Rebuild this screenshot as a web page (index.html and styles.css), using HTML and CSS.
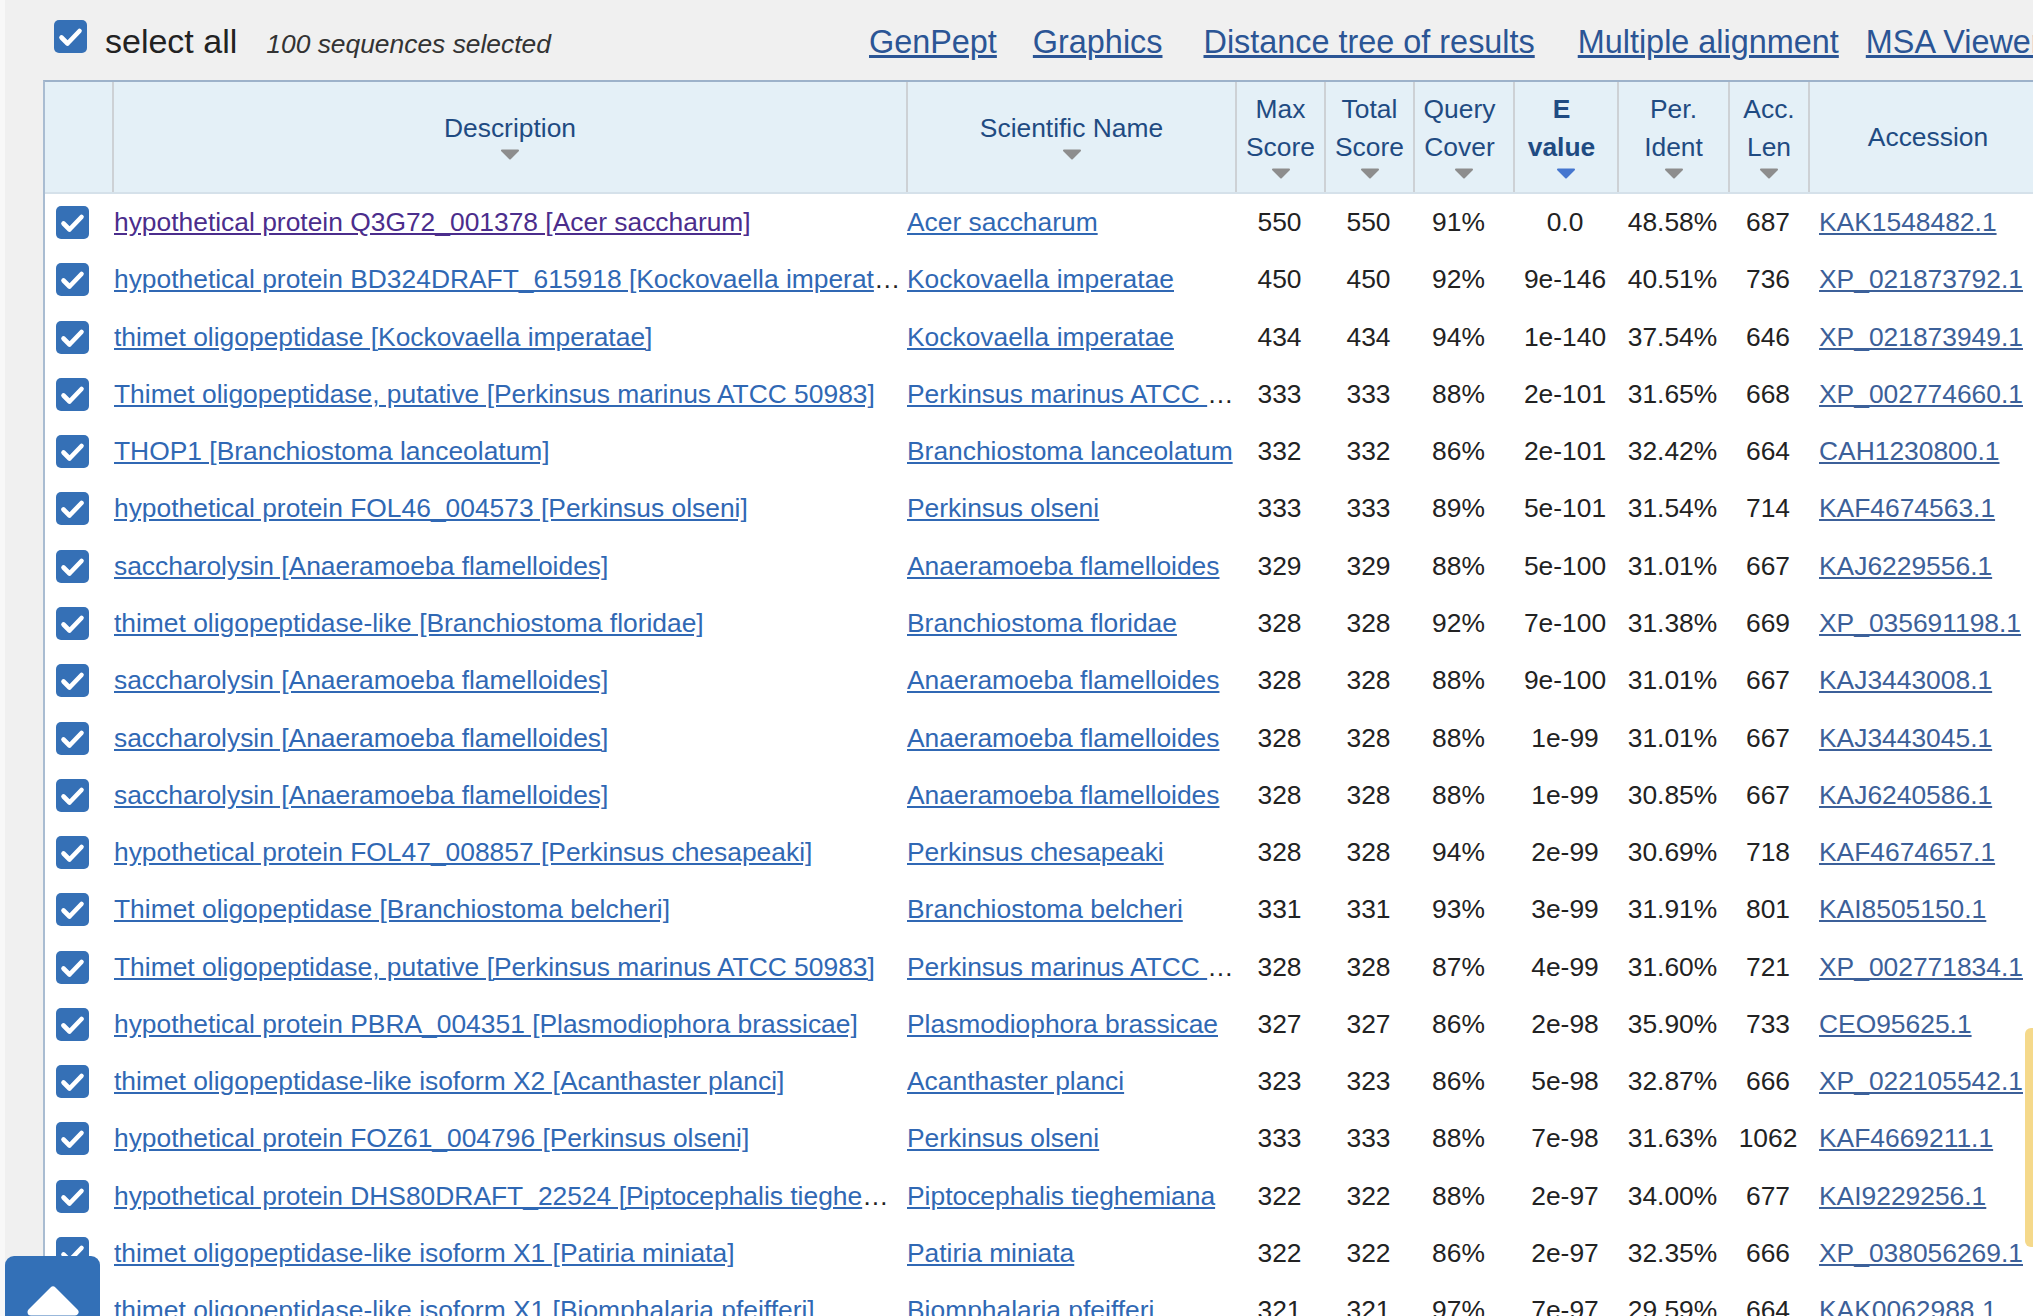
FILE: index.html
```html
<!DOCTYPE html>
<html lang="en">
<head>
<meta charset="utf-8">
<title>BLAST results</title>
<link rel="stylesheet" href="styles.css">
</head>
<body>
<svg class="defs" width="0" height="0" aria-hidden="true">
  <defs>
    <symbol id="cb" viewBox="0 0 33 33">
      <rect width="33" height="33" rx="5" fill="#3570b6"/>
      <path d="M7.5 17.5l6 6L25.5 11" fill="none" stroke="#fff" stroke-width="4.6" stroke-linecap="round" stroke-linejoin="round"/>
    </symbol>
    <symbol id="sort" viewBox="0 0 20 11">
      <path d="M2 1.5h16L10 9.5z" stroke-width="2" stroke-linejoin="round"/>
    </symbol>
  </defs>
</svg>
<div class="page">
  <div class="toolbar">
    <div class="sel">
      <svg class="cb top-cb"><use href="#cb"/></svg>
      <span class="sel-label">select all</span>
      <span class="sel-count">100 sequences selected</span>
    </div>
    <nav class="links">
      <a href="#" class="l-genpept">GenPept</a>
      <a href="#" class="l-graphics">Graphics</a>
      <a href="#" class="l-tree">Distance tree of results</a>
      <a href="#" class="l-multi">Multiple alignment</a>
      <a href="#" class="l-msa">MSA Viewer</a>
    </nav>
  </div>

  <div class="results">
    <div class="row head">
      <div class="h"></div>
      <div class="h"><span>Description</span><svg class="sort"><use href="#sort"/></svg></div>
      <div class="h"><span>Scientific Name</span><svg class="sort"><use href="#sort"/></svg></div>
      <div class="h"><span>Max<br>Score</span><svg class="sort"><use href="#sort"/></svg></div>
      <div class="h"><span>Total<br>Score</span><svg class="sort"><use href="#sort"/></svg></div>
      <div class="h shift"><span>Query<br>Cover</span><svg class="sort"><use href="#sort"/></svg></div>
      <div class="h active shift"><span>E<br>value</span><svg class="sort"><use href="#sort"/></svg></div>
      <div class="h"><span>Per.<br>Ident</span><svg class="sort"><use href="#sort"/></svg></div>
      <div class="h"><span>Acc.<br>Len</span><svg class="sort"><use href="#sort"/></svg></div>
      <div class="h"><span>Accession</span></div>
    </div>

    <div class="row"><div class="c chk"><svg class="cb"><use href="#cb"/></svg></div><div class="c desc"><a href="#" class="visited">hypothetical protein Q3G72_001378 [Acer saccharum]</a></div><div class="c sci"><a href="#">Acer saccharum</a></div><div class="c n">550</div><div class="c n">550</div><div class="c n q">91%</div><div class="c n">0.0</div><div class="c n">48.58%</div><div class="c n">687</div><div class="c acc"><a href="#">KAK1548482.1</a></div></div>
    <div class="row"><div class="c chk"><svg class="cb"><use href="#cb"/></svg></div><div class="c desc"><a href="#">hypothetical protein BD324DRAFT_615918 [Kockovaella imperatae]</a></div><div class="c sci"><a href="#">Kockovaella imperatae</a></div><div class="c n">450</div><div class="c n">450</div><div class="c n q">92%</div><div class="c n">9e-146</div><div class="c n">40.51%</div><div class="c n">736</div><div class="c acc"><a href="#">XP_021873792.1</a></div></div>
    <div class="row"><div class="c chk"><svg class="cb"><use href="#cb"/></svg></div><div class="c desc"><a href="#">thimet oligopeptidase [Kockovaella imperatae]</a></div><div class="c sci"><a href="#">Kockovaella imperatae</a></div><div class="c n">434</div><div class="c n">434</div><div class="c n q">94%</div><div class="c n">1e-140</div><div class="c n">37.54%</div><div class="c n">646</div><div class="c acc"><a href="#">XP_021873949.1</a></div></div>
    <div class="row"><div class="c chk"><svg class="cb"><use href="#cb"/></svg></div><div class="c desc"><a href="#">Thimet oligopeptidase, putative [Perkinsus marinus ATCC 50983]</a></div><div class="c sci"><a href="#">Perkinsus marinus ATCC 50983</a></div><div class="c n">333</div><div class="c n">333</div><div class="c n q">88%</div><div class="c n">2e-101</div><div class="c n">31.65%</div><div class="c n">668</div><div class="c acc"><a href="#">XP_002774660.1</a></div></div>
    <div class="row"><div class="c chk"><svg class="cb"><use href="#cb"/></svg></div><div class="c desc"><a href="#">THOP1 [Branchiostoma lanceolatum]</a></div><div class="c sci"><a href="#">Branchiostoma lanceolatum</a></div><div class="c n">332</div><div class="c n">332</div><div class="c n q">86%</div><div class="c n">2e-101</div><div class="c n">32.42%</div><div class="c n">664</div><div class="c acc"><a href="#">CAH1230800.1</a></div></div>
    <div class="row"><div class="c chk"><svg class="cb"><use href="#cb"/></svg></div><div class="c desc"><a href="#">hypothetical protein FOL46_004573 [Perkinsus olseni]</a></div><div class="c sci"><a href="#">Perkinsus olseni</a></div><div class="c n">333</div><div class="c n">333</div><div class="c n q">89%</div><div class="c n">5e-101</div><div class="c n">31.54%</div><div class="c n">714</div><div class="c acc"><a href="#">KAF4674563.1</a></div></div>
    <div class="row"><div class="c chk"><svg class="cb"><use href="#cb"/></svg></div><div class="c desc"><a href="#">saccharolysin [Anaeramoeba flamelloides]</a></div><div class="c sci"><a href="#">Anaeramoeba flamelloides</a></div><div class="c n">329</div><div class="c n">329</div><div class="c n q">88%</div><div class="c n">5e-100</div><div class="c n">31.01%</div><div class="c n">667</div><div class="c acc"><a href="#">KAJ6229556.1</a></div></div>
    <div class="row"><div class="c chk"><svg class="cb"><use href="#cb"/></svg></div><div class="c desc"><a href="#">thimet oligopeptidase-like [Branchiostoma floridae]</a></div><div class="c sci"><a href="#">Branchiostoma floridae</a></div><div class="c n">328</div><div class="c n">328</div><div class="c n q">92%</div><div class="c n">7e-100</div><div class="c n">31.38%</div><div class="c n">669</div><div class="c acc"><a href="#">XP_035691198.1</a></div></div>
    <div class="row"><div class="c chk"><svg class="cb"><use href="#cb"/></svg></div><div class="c desc"><a href="#">saccharolysin [Anaeramoeba flamelloides]</a></div><div class="c sci"><a href="#">Anaeramoeba flamelloides</a></div><div class="c n">328</div><div class="c n">328</div><div class="c n q">88%</div><div class="c n">9e-100</div><div class="c n">31.01%</div><div class="c n">667</div><div class="c acc"><a href="#">KAJ3443008.1</a></div></div>
    <div class="row"><div class="c chk"><svg class="cb"><use href="#cb"/></svg></div><div class="c desc"><a href="#">saccharolysin [Anaeramoeba flamelloides]</a></div><div class="c sci"><a href="#">Anaeramoeba flamelloides</a></div><div class="c n">328</div><div class="c n">328</div><div class="c n q">88%</div><div class="c n">1e-99</div><div class="c n">31.01%</div><div class="c n">667</div><div class="c acc"><a href="#">KAJ3443045.1</a></div></div>
    <div class="row"><div class="c chk"><svg class="cb"><use href="#cb"/></svg></div><div class="c desc"><a href="#">saccharolysin [Anaeramoeba flamelloides]</a></div><div class="c sci"><a href="#">Anaeramoeba flamelloides</a></div><div class="c n">328</div><div class="c n">328</div><div class="c n q">88%</div><div class="c n">1e-99</div><div class="c n">30.85%</div><div class="c n">667</div><div class="c acc"><a href="#">KAJ6240586.1</a></div></div>
    <div class="row"><div class="c chk"><svg class="cb"><use href="#cb"/></svg></div><div class="c desc"><a href="#">hypothetical protein FOL47_008857 [Perkinsus chesapeaki]</a></div><div class="c sci"><a href="#">Perkinsus chesapeaki</a></div><div class="c n">328</div><div class="c n">328</div><div class="c n q">94%</div><div class="c n">2e-99</div><div class="c n">30.69%</div><div class="c n">718</div><div class="c acc"><a href="#">KAF4674657.1</a></div></div>
    <div class="row"><div class="c chk"><svg class="cb"><use href="#cb"/></svg></div><div class="c desc"><a href="#">Thimet oligopeptidase [Branchiostoma belcheri]</a></div><div class="c sci"><a href="#">Branchiostoma belcheri</a></div><div class="c n">331</div><div class="c n">331</div><div class="c n q">93%</div><div class="c n">3e-99</div><div class="c n">31.91%</div><div class="c n">801</div><div class="c acc"><a href="#">KAI8505150.1</a></div></div>
    <div class="row"><div class="c chk"><svg class="cb"><use href="#cb"/></svg></div><div class="c desc"><a href="#">Thimet oligopeptidase, putative [Perkinsus marinus ATCC 50983]</a></div><div class="c sci"><a href="#">Perkinsus marinus ATCC 50983</a></div><div class="c n">328</div><div class="c n">328</div><div class="c n q">87%</div><div class="c n">4e-99</div><div class="c n">31.60%</div><div class="c n">721</div><div class="c acc"><a href="#">XP_002771834.1</a></div></div>
    <div class="row"><div class="c chk"><svg class="cb"><use href="#cb"/></svg></div><div class="c desc"><a href="#">hypothetical protein PBRA_004351 [Plasmodiophora brassicae]</a></div><div class="c sci"><a href="#">Plasmodiophora brassicae</a></div><div class="c n">327</div><div class="c n">327</div><div class="c n q">86%</div><div class="c n">2e-98</div><div class="c n">35.90%</div><div class="c n">733</div><div class="c acc"><a href="#">CEO95625.1</a></div></div>
    <div class="row"><div class="c chk"><svg class="cb"><use href="#cb"/></svg></div><div class="c desc"><a href="#">thimet oligopeptidase-like isoform X2 [Acanthaster planci]</a></div><div class="c sci"><a href="#">Acanthaster planci</a></div><div class="c n">323</div><div class="c n">323</div><div class="c n q">86%</div><div class="c n">5e-98</div><div class="c n">32.87%</div><div class="c n">666</div><div class="c acc"><a href="#">XP_022105542.1</a></div></div>
    <div class="row"><div class="c chk"><svg class="cb"><use href="#cb"/></svg></div><div class="c desc"><a href="#">hypothetical protein FOZ61_004796 [Perkinsus olseni]</a></div><div class="c sci"><a href="#">Perkinsus olseni</a></div><div class="c n">333</div><div class="c n">333</div><div class="c n q">88%</div><div class="c n">7e-98</div><div class="c n">31.63%</div><div class="c n">1062</div><div class="c acc"><a href="#">KAF4669211.1</a></div></div>
    <div class="row"><div class="c chk"><svg class="cb"><use href="#cb"/></svg></div><div class="c desc"><a href="#">hypothetical protein DHS80DRAFT_22524 [Piptocephalis tieghemiana]</a></div><div class="c sci"><a href="#">Piptocephalis tieghemiana</a></div><div class="c n">322</div><div class="c n">322</div><div class="c n q">88%</div><div class="c n">2e-97</div><div class="c n">34.00%</div><div class="c n">677</div><div class="c acc"><a href="#">KAI9229256.1</a></div></div>
    <div class="row"><div class="c chk"><svg class="cb"><use href="#cb"/></svg></div><div class="c desc"><a href="#">thimet oligopeptidase-like isoform X1 [Patiria miniata]</a></div><div class="c sci"><a href="#">Patiria miniata</a></div><div class="c n">322</div><div class="c n">322</div><div class="c n q">86%</div><div class="c n">2e-97</div><div class="c n">32.35%</div><div class="c n">666</div><div class="c acc"><a href="#">XP_038056269.1</a></div></div>
    <div class="row"><div class="c chk"><svg class="cb"><use href="#cb"/></svg></div><div class="c desc"><a href="#">thimet oligopeptidase-like isoform X1 [Biomphalaria pfeifferi]</a></div><div class="c sci"><a href="#">Biomphalaria pfeifferi</a></div><div class="c n">321</div><div class="c n">321</div><div class="c n q">97%</div><div class="c n">7e-97</div><div class="c n">29.59%</div><div class="c n">664</div><div class="c acc"><a href="#">KAK0062988.1</a></div></div>
  </div>
</div>

<a href="#" class="to-top" aria-label="Back to top">
  <svg width="95" height="60" viewBox="0 0 95 60"><path d="M48 34L70 56H26z" fill="#fff" stroke="#fff" stroke-width="7" stroke-linejoin="round"/></svg>
</a>
<div class="feedback-tab"></div>
</body>
</html>
```

FILE: styles.css
```css
html, body {
  margin: 0;
  padding: 0;
  overflow: hidden;
  height: 100%;
}

body {
  background: #f0f0f0;
  font-family: "Liberation Sans", Arial, Helvetica, sans-serif;
  font-size: 26.4px;
  color: #222;
}

.defs {
  position: absolute;
  width: 0;
  height: 0;
  overflow: hidden;
}

.page {
  border-left: 5px solid #f8f8f8;
  min-height: 100%;
  box-sizing: border-box;
}

/* toolbar */
.toolbar {
  display: flex;
  align-items: baseline;
  height: 80px;
  box-sizing: border-box;
  padding-top: 20px;
  padding-left: 49px;
  white-space: nowrap;
}

.sel {
  display: flex;
  align-items: baseline;
  flex: 0 0 815px;
}

.cb {
  width: 33px;
  height: 33px;
  display: block;
}

.top-cb {
  margin-right: 18px;
}

.sel-label {
  font-size: 34px;
  color: #222;
  margin-right: 29px;
}

.sel-count {
  font-style: italic;
  font-size: 26.4px;
  color: #333;
}

.links {
  display: flex;
  align-items: baseline;
}

.links a {
  font-size: 32.4px;
  color: #2b5595;
  text-decoration: underline;
  text-underline-offset: 2px;
}

.links .l-genpept { margin-right: 36px; }
.links .l-graphics { margin-right: 41px; }
.links .l-tree { margin-right: 43px; }
.links .l-multi { margin-right: 27px; }

/* results grid */
.results {
  margin-left: 38px;
  width: 2003px;
  box-sizing: border-box;
  border-top: 2px solid #9db2ca;
  border-left: 2px solid #a9bcd1;
  background: #fff;
}

.row {
  display: grid;
  grid-template-columns: 67px 794px 329px 89px 89px 100px 104px 111px 80px 238px;
  height: 57.27px;
  align-items: center;
}

.row.head {
  height: 112px;
  box-sizing: border-box;
  background: #e4f0f7;
  border-bottom: 2px solid #d5e1ea;
  align-items: stretch;
}

.h {
  display: flex;
  flex-direction: column;
  align-items: center;
  justify-content: center;
  text-align: center;
  line-height: 38px;
  color: #1f4b82;
  border-left: 2px solid #cdd1d5;
}

.h:first-child {
  border-left: 0;
}

.h.shift span {
  margin-right: 9px;
}

.h.active {
  font-weight: bold;
}

.sort {
  width: 20px;
  height: 11px;
  margin-top: 2px;
  margin-bottom: 6px;
  fill: #8d8d8d;
  stroke: #8d8d8d;
}

.h.active .sort {
  fill: #4576cf;
  stroke: #4576cf;
}

.c {
  white-space: nowrap;
  overflow: hidden;
  text-overflow: ellipsis;
  min-width: 0;
}

.chk {
  padding-left: 11px;
}

.desc {
  padding-left: 2px;
}

.sci {
  padding-left: 1px;
}

.n {
  text-align: center;
}

.n.q {
  padding-right: 9px;
}

.acc {
  padding-left: 11px;
}

.c a {
  color: #3068b4;
  text-decoration: underline;
  text-underline-offset: 2px;
}

.c a.visited {
  color: #4b2d8c;
}

.acc a {
  color: #3c6099;
}

/* overlays */
.to-top {
  position: fixed;
  left: 5px;
  top: 1256px;
  width: 95px;
  height: 90px;
  background: #3370b7;
  border-radius: 9px;
  display: block;
}

.to-top svg {
  display: block;
}

.feedback-tab {
  position: fixed;
  left: 2025px;
  top: 1028px;
  width: 20px;
  height: 219px;
  background: #f5d98b;
  border-radius: 6px;
}
```
